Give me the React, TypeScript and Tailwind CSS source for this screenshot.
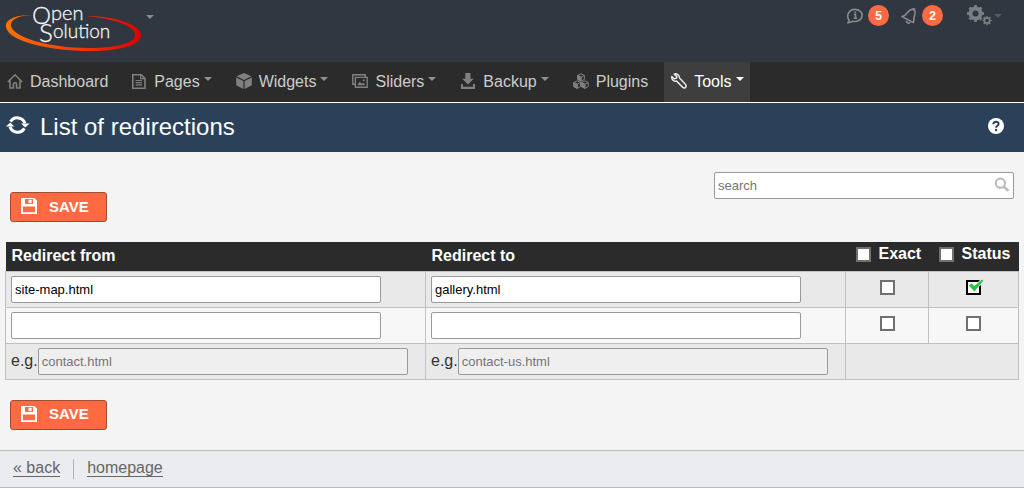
import { useState } from "react";
import type { ReactNode } from "react";
import { clsx } from "clsx";

function Caret({ className }: { className?: string }) {
  return (
    <svg viewBox="0 0 8 4" className={clsx("h-1 w-2 shrink-0", className)} fill="currentColor">
      <path d="M0 0h8L4 4z" />
    </svg>
  );
}

const icons: Record<string, ReactNode> = {
  home: (
    <g fill="none" stroke="currentColor" strokeWidth="1.6">
      <path d="M.8 9 8 1.8 15.2 9" />
      <path d="M3 7.5V15h3.4v-3.6q0-1.6 1.6-1.6t1.6 1.6V15H13V7.5" />
    </g>
  ),
  page: (
    <g fill="none" stroke="currentColor" strokeWidth="1.6">
      <path d="M1.8 1.8h8.4l3.8 3.6v9.8H1.8z" />
      <path d="M9.6 2v3.6H13" strokeWidth="1.2" />
      <path d="M4.6 7.5h6.4M4.6 9.7h6.4M4.6 11.9h6.4" strokeWidth="1.2" />
    </g>
  ),
  cube: (
    <g fill="currentColor">
      <path d="M8 0l7.3 3.3L8 6.9.7 3.3z" />
      <path d="M.2 4.6l7.2 3.5V16L.2 12.3z" />
      <path d="M15.8 4.6L8.6 8.1V16l7.2-3.7z" />
    </g>
  ),
  images: (
    <g fill="none" stroke="currentColor" strokeWidth="1.4">
      <path d="M3 11.3H.8V1.8h12.4V4" />
      <path d="M3.4 4.4h11.8v9.8H3.4z" />
      <path d="M5.3 12.3l2.5-3.6 2 2 1.4-1.2 2.2 2.8z" fill="currentColor" stroke="none" />
      <circle cx="11.8" cy="7.2" r="1" fill="currentColor" stroke="none" />
    </g>
  ),
  download: (
    <g fill="currentColor">
      <path d="M5.3 0h5.2v5.7h3.2L8 11.6 2.2 5.7h3.1z" />
      <path d="M1 11h2v2.7h10V11h2v5H1z" />
    </g>
  ),
  cubes: (
    <g fill="none" stroke="currentColor" strokeWidth="1">
      <path d="M8 .7l3.4 1.7v4L8 8.2 4.6 6.4v-4zM4.6 2.4L8 4.1l3.4-1.7M8 4.1v4" />
      <path d="M4.2 7.8l3.4 1.7v4l-3.4 1.8-3.4-1.8v-4zM.8 9.5l3.4 1.7 3.4-1.7M4.2 11.2v4" />
      <path d="M11.8 7.8l3.4 1.7v4l-3.4 1.8-3.4-1.8v-4zM8.4 9.5l3.4 1.7 3.4-1.7M11.8 11.2v4" />
      <path d="M4.6 2.4L8 4.1v4L4.6 6.4zM.8 9.5l3.4 1.7v4.1L.8 13.5zM8.4 9.5l3.4 1.7v4.1l-3.4-1.8z" fill="currentColor" />
    </g>
  ),
  wrench: (
    <path
      d="M3.2 1.1C5.6.2 8.6 1.8 8.5 5l6.1 6.6c1.6 2-.9 4.4-2.8 2.8L5.6 8.1C2.8 8.8.3 6.6.8 3.6l2.6 2.3L5.7 5l.1-1.6z"
      fill="none"
      stroke="currentColor"
      strokeWidth="1.5"
      strokeLinejoin="round"
    />
  ),
  message: (
    <g fill="none" stroke="currentColor" strokeWidth="1.6">
      <path d="M1 14.6c.8-.7 1.1-1.6 1-2.6C-.9 8 1.5 1.4 8.1 1.4c4.2 0 7 2.6 7 5.9 0 5.2-5.5 6.8-9.4 5.9-1.4.8-3 1.3-4.7 1.4z" />
      <path d="M6.8 6.4h1.7v3.6M6.6 10.2h3.6M8.3 3.4v1.6" />
    </g>
  ),
  bell: (
    <g fill="none" stroke="currentColor" strokeWidth="1.6" strokeLinejoin="round">
      <path d="M1 8.6C6.4 7.6 6.2 2.4 10.4 1.5c3.2-.5 4.2 1.6 3.4 4.7-.9 3-1.2 5-1.2 8.4z" />
      <path d="M11 1.2l3.2-.4M5.4 12.6c.2 2.6 2.8 3.2 3.8 1.6" />
    </g>
  ),
};

function Icon({ name, className }: { name: string; className?: string }) {
  return (
    <svg viewBox="0 0 16 16" className={clsx("size-4 shrink-0", className)} aria-hidden="true">
      {icons[name]}
    </svg>
  );
}

function Logo() {
  return (
    <svg viewBox="0 0 140 54" className="h-[54px] w-[140px]">
      <defs>
        <linearGradient id="swoosh" x1="0" x2="1">
          <stop offset="0" stopColor="#ff7200" />
          <stop offset="0.5" stopColor="#f63c08" />
          <stop offset="1" stopColor="#dd0000" />
        </linearGradient>
      </defs>
      <path
        d="M27 15C10 15 1 20 2 27c2 14 42 24 84 24 31 0 51-6 51-16C137 24 108 16 83 16c28 3 48 10 48 19 0 8-18 13-46 13C44 48 9 37 7 26c-1-6 6-10 20-11z"
        fill="url(#swoosh)"
      />
      <g fill="#f4f4f4" stroke="#f4f4f4" strokeWidth="0.3" className="font-['Lato'] font-light">
        <text x="28" y="24" fontSize="24">
          O<tspan dy="-4" fontSize="20">pen</tspan>
        </text>
        <text x="35" y="42" fontSize="26">
          S<tspan dy="-4" fontSize="19">olution</tspan>
        </text>
      </g>
    </svg>
  );
}

function Gears() {
  return (
    <svg viewBox="0 0 25 21" className="h-[21px] w-[25px]" fill="none" stroke="currentColor">
      <circle cx="8.5" cy="8.5" r="5" strokeWidth="4" />
      <circle cx="8.5" cy="8.5" r="7.4" strokeWidth="2.2" pathLength="16" strokeDasharray="1 1" strokeDashoffset="0.5" />
      <circle cx="20" cy="15.5" r="2.7" strokeWidth="1.8" />
      <circle cx="20" cy="15.5" r="4" strokeWidth="1.4" pathLength="16" strokeDasharray="1 1" strokeDashoffset="0.5" />
    </svg>
  );
}

const menu = [
  { label: "Dashboard", icon: "home" },
  { label: "Pages", icon: "page", dropdown: true },
  { label: "Widgets", icon: "cube", dropdown: true },
  { label: "Sliders", icon: "images", dropdown: true },
  { label: "Backup", icon: "download", dropdown: true },
  { label: "Plugins", icon: "cubes" },
  { label: "Tools", icon: "wrench", dropdown: true, active: true },
];

const notices = [
  { icon: "message", count: 5, label: "Messages" },
  { icon: "bell", count: 2, label: "Notifications" },
];

function SaveButton() {
  return (
    <button
      type="submit"
      className="flex h-[30px] w-[97px] items-center rounded-[3px] border border-[#a84a33] bg-[#ff6a43] pl-[10px] text-[15px] font-bold text-white"
    >
      <svg viewBox="0 0 16 16" className="mr-3 mb-0.5 size-4" fill="currentColor" aria-hidden="true">
        <path fillRule="evenodd" d="M0 0h13.5L16 2.5V16H0zM4 1v5h8V1zM2 8.4v5.8h12V8.4z" />
        <path d="M7.5 1.8h3.2v3.4H7.5z" />
      </svg>
      SAVE
    </button>
  );
}

function Check({ label, defaultChecked = false }: { label: string; defaultChecked?: boolean }) {
  const [checked, setChecked] = useState(defaultChecked);
  return (
    <span className="relative mx-auto block size-[15px]">
      <input
        type="checkbox"
        aria-label={label}
        checked={checked}
        onChange={(e) => setChecked(e.target.checked)}
        className="block size-[15px] appearance-none border-2 border-[#707070] bg-white checked:border-black"
      />
      {checked && (
        <svg viewBox="0 0 16 14" className="pointer-events-none absolute -top-px left-[3px] h-[14px] w-4">
          <path d="M9 6L14 .8" fill="none" stroke="#e9e9e9" strokeWidth="4" />
          <path d="M0 6.4l2.4-1.8 3 2.4L13.2.4l1.2 1L5.4 12.4z" fill="#27c43c" />
        </svg>
      )}
    </span>
  );
}

const field = "h-[27px] rounded-[2px] border border-[#999] px-[3px] text-[13px]";

const rows = [
  { from: "site-map.html", to: "gallery.html", status: true },
  { from: "", to: "", status: false },
];

export default function App() {
  return (
    <div className="bg-[#f4f4f4] font-['Liberation_Sans',Arial,sans-serif] text-base text-[#333]">
      <header className="flex h-[62px] items-start justify-between bg-[#303740] pr-[22px] pl-1 text-[#868a8f]">
        <div className="flex items-start">
          <a href="#" aria-label="Open Solution">
            <Logo />
          </a>
          <Caret className="mt-[15px] ml-0.5" />
        </div>
        <div className="flex items-center pt-[5px]">
          {notices.map((n) => (
            <a key={n.icon} href="#" aria-label={n.label} className="mr-3 flex items-center gap-[5px]">
              <Icon name={n.icon} />
              <span className="flex size-[21px] items-center justify-center rounded-full bg-[#ff6a43] text-xs font-bold text-white">
                {n.count}
              </span>
            </a>
          ))}
          <button type="button" aria-label="Settings" className="ml-3 flex items-center gap-0.5 text-[#7b7f84]">
            <Gears />
            <Caret className="text-[#555b63]" />
          </button>
        </div>
      </header>

      <nav className="flex h-10 gap-[11px] bg-[#2b2b2b]">
        {menu.map((item) => (
          <a
            key={item.label}
            href="#"
            className={clsx(
              "flex items-center pl-[7px]",
              item.dropdown ? "pr-1.5" : "pr-[5px]",
              item.active ? "bg-[#3e3e3e] text-white" : "text-[#ccc]"
            )}
          >
            <Icon name={item.icon} className={clsx("mr-[7px] mb-0.5", item.active ? "text-[#e6e6e6]" : "text-[#808080]")} />
            {item.label}
            {item.dropdown && <Caret className={clsx("mb-1.5 ml-1", !item.active && "text-[#909090]")} />}
          </a>
        ))}
      </nav>

      <div className="flex h-[50px] items-center border-t border-white bg-[#2b415a] pr-5 pb-0.5 pl-1.5 text-white">
        <svg viewBox="0 0 24 20" className="mr-[10px] mb-1 h-5 w-6" aria-hidden="true">
          <g fill="none" stroke="currentColor" strokeWidth="3">
            <path d="M4.6 6.6A8 8 0 0 1 19 8.4" />
            <path d="M18.4 13.4A8 8 0 0 1 4 11.8" />
          </g>
          <path d="M15 8.4h8.6l-4.3 4.2zM0 11.6h8.4L4.2 7.4z" fill="currentColor" />
        </svg>
        <h1 className="text-2xl">List of redirections</h1>
        <button type="button" aria-label="Help" className="mb-0.5 ml-auto">
          <svg viewBox="0 0 16 16" className="size-4">
            <circle cx="8" cy="8" r="8" fill="currentColor" />
            <path d="M5.3 6.2C5.5 3.2 10.6 3 10.6 6c0 1.9-2.5 1.7-2.5 3.8" fill="none" stroke="#2b415a" strokeWidth="2" />
            <circle cx="8.1" cy="12" r="1.2" fill="#2b415a" />
          </svg>
        </button>
      </div>

      <form onSubmit={(e) => e.preventDefault()} className="px-[5px] py-5">
        <div className="flex items-start justify-between px-[5px]">
          <div className="mt-5">
            <SaveButton />
          </div>
          <div className="relative w-[300px]">
            <input
              type="search"
              aria-label="search"
              placeholder="search"
              className={clsx(field, "block w-full bg-white placeholder:text-[#757575]")}
            />
            <svg viewBox="0 0 16 16" className="absolute top-[5px] right-1 size-4" fill="none" stroke="#b9b9b9">
              <circle cx="6.4" cy="6.2" r="4.6" strokeWidth="2" />
              <path d="M9.8 9.6l4.6 4.3" strokeWidth="2.6" />
            </svg>
          </div>
        </div>

        <table className="my-5 w-full table-fixed border-collapse">
          <colgroup>
            <col />
            <col />
            <col className="w-[83px]" />
            <col className="w-[90px]" />
          </colgroup>
          <thead>
            <tr className="h-[29px] bg-[#2b2b2b] text-left text-white">
              <th className="px-1.5">Redirect from</th>
              <th className="px-1.5">Redirect to</th>
              {["Exact", "Status"].map((label) => (
                <th key={label} className="pb-1 pl-[10px]">
                  <label className="flex items-center gap-2">
                    <input type="checkbox" className="size-[15px] appearance-none border-2 border-[#707070] bg-white" />
                    {label}
                  </label>
                </th>
              ))}
            </tr>
          </thead>
          <tbody>
            {rows.map((row, index) => (
              <tr key={index} className="bg-[#f7f7f7] odd:bg-[#e9e9e9]">
                <td className="border border-[#c1c1c1] px-[5px] py-1">
                  <input type="text" aria-label="Redirect from" defaultValue={row.from} className={clsx(field, "block w-[370px] bg-white text-black")} />
                </td>
                <td className="border border-[#c1c1c1] px-[5px] py-1">
                  <input type="text" aria-label="Redirect to" defaultValue={row.to} className={clsx(field, "block w-[370px] bg-white text-black")} />
                </td>
                <td className="border border-[#c1c1c1] pt-2 align-top">
                  <Check label="Exact" />
                </td>
                <td className="border border-[#c1c1c1] pt-2 align-top">
                  <Check label="Status" defaultChecked={row.status} />
                </td>
              </tr>
            ))}
            <tr className="bg-[#e9e9e9]">
              {["contact.html", "contact-us.html"].map((example) => (
                <td key={example} className="border border-[#c1c1c1] px-[5px] py-1">
                  <label className="flex items-center">
                    e.g.
                    <input type="text" disabled placeholder={example} className={clsx(field, "w-[370px] bg-[#efefef] placeholder:text-[#757575]")} />
                  </label>
                </td>
              ))}
              <td colSpan={2} className="border border-[#c1c1c1]"></td>
            </tr>
          </tbody>
        </table>

        <div className="px-[5px]">
          <SaveButton />
        </div>
      </form>

      <footer className="flex h-[38px] items-center border-y border-[#b9b9b9] bg-[#ebecf0] pl-[13px] text-[#666]">
        <a href="#" className="border-b border-[#666] leading-4">« back</a>
        <span className="mx-[13px] h-5 w-px bg-[#b0b0b0]"></span>
        <a href="#" className="border-b border-[#666] leading-4">homepage</a>
      </footer>
    </div>
  );
}
